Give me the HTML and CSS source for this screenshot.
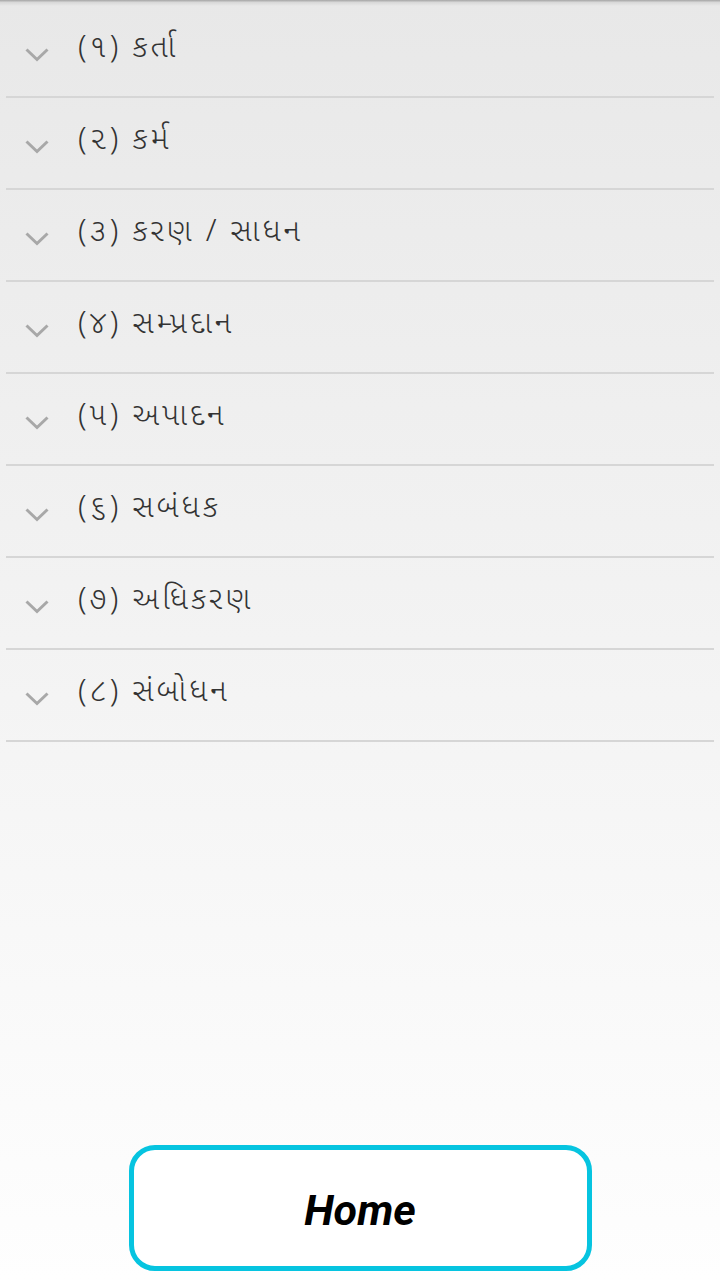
FILE: index.html
```html
<!DOCTYPE html>
<html lang="gu">
<head>
    <meta charset="UTF-8">
    <meta name="viewport" content="width=device-width, initial-scale=1.0">
    <title>વિભક્તિ</title>
    <link rel="stylesheet" href="styles.css">
</head>
<body>
    <div class="top-shadow"></div>
    <ul class="case-list">
        <li class="case-row"><svg class="chevron" viewBox="0 0 24 14"><polyline points="1.5,1.5 12,11.5 22.5,1.5"/></svg><span class="case-name">(૧) કર્તા</span></li>
        <li class="case-row"><svg class="chevron" viewBox="0 0 24 14"><polyline points="1.5,1.5 12,11.5 22.5,1.5"/></svg><span class="case-name">(૨) કર્મ</span></li>
        <li class="case-row"><svg class="chevron" viewBox="0 0 24 14"><polyline points="1.5,1.5 12,11.5 22.5,1.5"/></svg><span class="case-name">(૩) કરણ / સાધન</span></li>
        <li class="case-row"><svg class="chevron" viewBox="0 0 24 14"><polyline points="1.5,1.5 12,11.5 22.5,1.5"/></svg><span class="case-name">(૪) સમ્પ્રદાન</span></li>
        <li class="case-row"><svg class="chevron" viewBox="0 0 24 14"><polyline points="1.5,1.5 12,11.5 22.5,1.5"/></svg><span class="case-name">(૫) અપાદન</span></li>
        <li class="case-row"><svg class="chevron" viewBox="0 0 24 14"><polyline points="1.5,1.5 12,11.5 22.5,1.5"/></svg><span class="case-name">(૬) સબંધક</span></li>
        <li class="case-row"><svg class="chevron" viewBox="0 0 24 14"><polyline points="1.5,1.5 12,11.5 22.5,1.5"/></svg><span class="case-name">(૭) અધિકરણ</span></li>
        <li class="case-row"><svg class="chevron" viewBox="0 0 24 14"><polyline points="1.5,1.5 12,11.5 22.5,1.5"/></svg><span class="case-name">(૮) સંબોધન</span></li>
    </ul>
    <button class="home-btn">Home</button>
</body>
</html>
```

FILE: styles.css
```css
html, body {
    height: 100%;
}
body {
    margin: 0;
    display: flex;
    flex-direction: column;
    background: linear-gradient(#e8e8e8, #fefefe);
    font-family: 'Noto Sans', 'Noto Sans Gujarati', 'Lohit Gujarati', sans-serif;
}
.top-shadow {
    height: 6px;
    background: linear-gradient(#a4a4a4, #d8d8d8 40%, rgba(232, 232, 232, 0));
}
.case-list {
    list-style: none;
    margin: 0;
    padding: 0;
}
.case-row {
    display: flex;
    align-items: center;
    height: 90px;
    margin: 0 6px;
    border-bottom: 2px solid #d6d6d6;
}
.chevron {
    width: 24px;
    height: 14px;
    margin: 8px 29px 0 19px;
    fill: none;
    stroke: #a8a8a8;
    stroke-width: 3;
}
.case-name {
    padding-bottom: 8px;
    font-size: 31px;
    font-weight: 300;
    color: #333;
    letter-spacing: 3px;
}
.home-btn {
    margin: auto auto 9px;
    width: 463px;
    height: 126px;
    padding-top: 4px;
    background: #fff;
    border: 5px solid #06c4e0;
    border-radius: 26px;
    font-family: Roboto, 'Liberation Sans', sans-serif;
    font-size: 43px;
    font-weight: bold;
    font-style: italic;
    color: #000;
}
```
